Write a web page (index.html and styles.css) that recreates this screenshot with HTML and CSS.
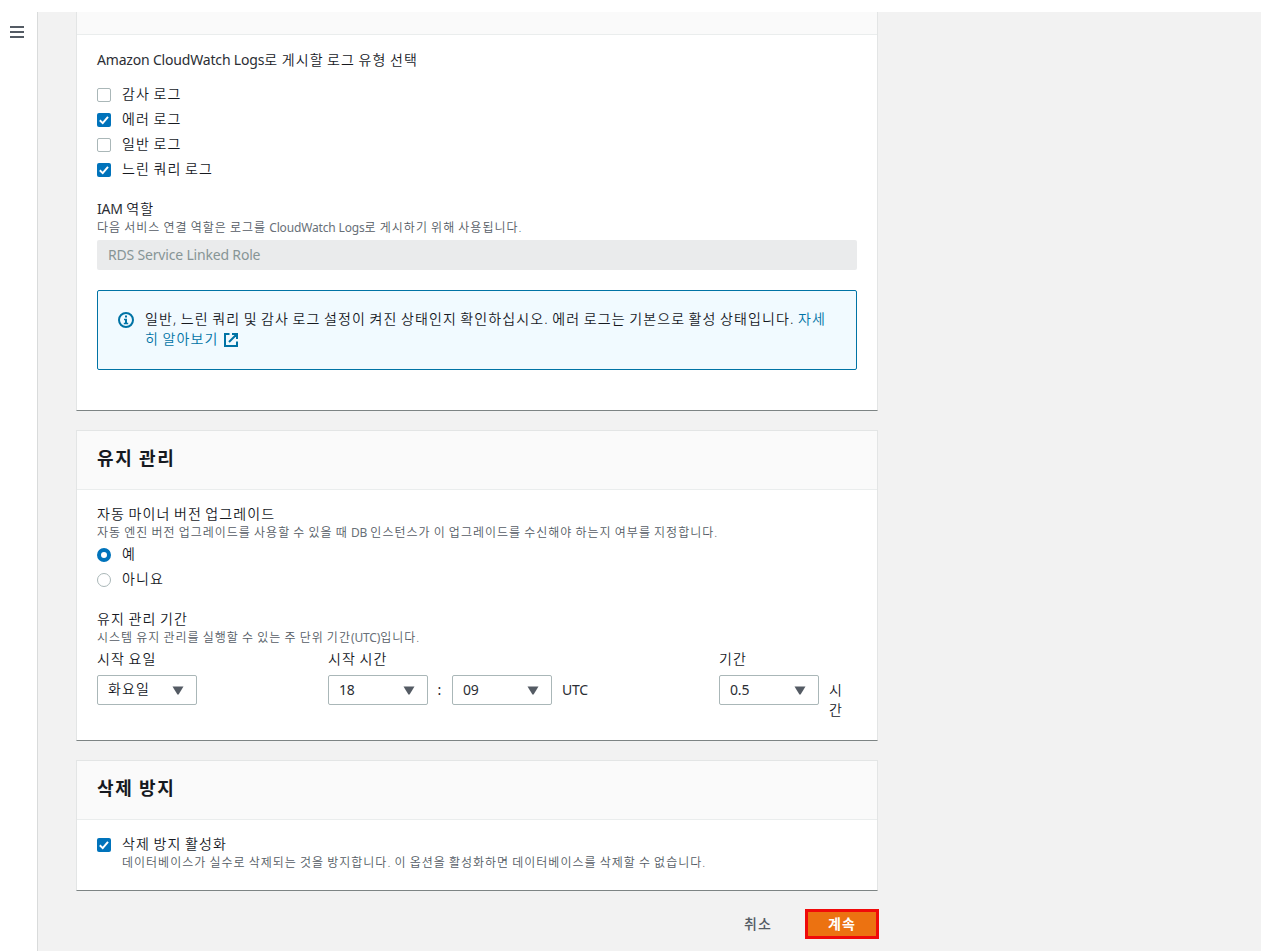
FILE: index.html
```html
<!DOCTYPE html>
<html lang="ko">
<head>
<meta charset="utf-8">
<title>DB 인스턴스 수정</title>
<link rel="stylesheet" href="styles.css">
</head>
<body>
<div class="app">
  <nav class="rail">
    <svg class="menu" width="14" height="12" viewBox="0 0 14 12"><path d="M0 1h14M0 6h14M0 11h14" stroke="#545b64" stroke-width="2"/></svg>
  </nav>
  <main class="main">
    <section class="card card-logs">
      <header class="card-head head-cut"></header>
      <div class="card-body body-logs">
        <p class="label label-first"><span class="en">Amazon CloudWatch Logs</span>로 게시할 로그 유형 선택</p>
        <div class="options options-logs">
          <label class="option"><span class="box"></span>감사 로그</label>
          <label class="option"><span class="box on"><svg width="14" height="14" viewBox="0 0 14 14"><path d="M2.8 7.3l2.9 2.8 5.3-6.3"/></svg></span>에러 로그</label>
          <label class="option"><span class="box"></span>일반 로그</label>
          <label class="option"><span class="box on"><svg width="14" height="14" viewBox="0 0 14 14"><path d="M2.8 7.3l2.9 2.8 5.3-6.3"/></svg></span>느린 쿼리 로그</label>
        </div>
        <p class="label"><span class="en">IAM </span>역할</p>
        <p class="hint">다음 서비스 연결 역할은 로그를 <span class="en">CloudWatch Logs</span>로 게시하기 위해 사용됩니다.</p>
        <div class="input-off"><span class="en">RDS Service Linked Role</span></div>
        <div class="alert">
          <svg class="info" width="16" height="16" viewBox="0 0 16 16"><circle cx="8" cy="8" r="7" fill="none" stroke="#0073a5" stroke-width="2"/><path d="M7 3.6h2v1.9H7zM6 6.7h3v4h1.2v1.5H5.8v-1.5H7V8.2H6z" fill="#0073a5"/></svg>
          <p class="alert-text">일반, 느린 쿼리 및 감사 로그 설정이 켜진 상태인지 확인하십시오. 에러 로그는 기본으로 활성 상태입니다. <a class="link">자세<br>히 알아보기<svg class="ext" width="14" height="14" viewBox="0 0 14 14"><path d="M5.5 1H1v12h12V8.5M8 1h5v5M13 1L5 9" fill="none" stroke="#0073a5" stroke-width="2"/></svg></a></p>
        </div>
      </div>
    </section>

    <section class="card">
      <header class="card-head"><h2 class="title">유지 관리</h2></header>
      <div class="card-body body-maint">
        <p class="label">자동 마이너 버전 업그레이드</p>
        <p class="hint">자동 엔진 버전 업그레이드를 사용할 수 있을 때 <span class="en">DB</span> 인스턴스가 이 업그레이드를 수신해야 하는지 여부를 지정합니다.</p>
        <div class="options options-radio">
          <label class="option"><span class="radio picked"></span>예</label>
          <label class="option"><span class="radio"></span>아니요</label>
        </div>
        <p class="label">유지 관리 기간</p>
        <p class="hint">시스템 유지 관리를 실행할 수 있는 주 단위 기간<span class="en">(UTC)</span>입니다.</p>
        <div class="window">
          <div class="field">
            <span class="label">시작 요일</span>
            <div class="row"><div class="select"><span class="value-ko">화요일</span><svg width="12" height="9" viewBox="0 0 12 9"><path d="M.5 .5h11L6.6 8.5H5.4z"/></svg></div></div>
          </div>
          <div class="field">
            <span class="label">시작 시간</span>
            <div class="row">
              <div class="select"><span class="en">18</span><svg width="12" height="9" viewBox="0 0 12 9"><path d="M.5 .5h11L6.6 8.5H5.4z"/></svg></div>
              <span class="colon">:</span>
              <div class="select"><span class="en">09</span><svg width="12" height="9" viewBox="0 0 12 9"><path d="M.5 .5h11L6.6 8.5H5.4z"/></svg></div>
              <span class="unit en">UTC</span>
            </div>
          </div>
          <div class="field">
            <span class="label">기간</span>
            <div class="row">
              <div class="select"><span class="en">0.5</span><svg width="12" height="9" viewBox="0 0 12 9"><path d="M.5 .5h11L6.6 8.5H5.4z"/></svg></div>
              <span class="unit unit-narrow">시간</span>
            </div>
          </div>
        </div>
      </div>
    </section>

    <section class="card">
      <header class="card-head"><h2 class="title">삭제 방지</h2></header>
      <div class="card-body body-delete">
        <label class="option"><span class="box on"><svg width="14" height="14" viewBox="0 0 14 14"><path d="M2.8 7.3l2.9 2.8 5.3-6.3"/></svg></span>삭제 방지 활성화</label>
        <p class="hint hint-indent">데이터베이스가 실수로 삭제되는 것을 방지합니다. 이 옵션을 활성화하면 데이터베이스를 삭제할 수 없습니다.</p>
      </div>
    </section>

    <div class="actions">
      <button class="btn btn-text">취소</button>
      <button class="btn btn-primary">계속</button>
    </div>
  </main>
</div>
</body>
</html>
```
FILE: styles.css
```css
* { box-sizing: border-box; }

body {
  margin: 0;
  background: #fff;
  color: #16191f;
  font: 350 14px/20px "Noto Sans", "Noto Sans CJK KR", sans-serif;
  letter-spacing: .079em;
  word-spacing: -.09em;
  overflow: hidden;
}

p, h2 { margin: 0; }

.en {
  font-weight: 400;
  letter-spacing: -.013em;
  word-spacing: 0;
  color: #2b2e34;
}

.app {
  display: flex;
  height: 951px;
  padding-top: 12px;
}

.rail {
  flex: none;
  width: 38px;
  border-right: 1px solid #d9dbdb;
  padding: 14px 0 0 10px;
}

.menu { display: block; }

.main {
  flex: 1;
  background: #f2f2f2;
  padding-left: 38px;
}

.card {
  width: 802px;
  margin-bottom: 19px;
  background: #fff;
  border: 1px solid #e3e5e5;
  border-bottom: 1px solid #7d8484;
}

.card-logs { border-top: 0; }

.card-head {
  height: 59px;
  padding: 16px 20px;
  background: #fafafa;
  border-bottom: 1px solid #eaeded;
}

.head-cut { height: 23px; padding: 0; }

.title {
  font-size: 18px;
  line-height: 22px;
  font-weight: 700;
  letter-spacing: .1em;
}

.card-body { padding: 0 20px; }
.body-logs { height: 375px; padding-top: 15px; }
.body-maint { height: 250px; padding-top: 15px; }
.body-delete { height: 70px; padding-top: 15px; }

.label {
  display: block;
  padding-bottom: 2px;
  line-height: 18px;
  white-space: nowrap;
}

.label-first { padding: 0; line-height: 20px; }

.hint {
  font-size: 12px;
  line-height: 16px;
  letter-spacing: .083em;
  word-spacing: -.08em;
  color: #545b64;
  white-space: nowrap;
}

.hint .en { color: #687078; }

.hint-indent { padding-left: 25px; }

.options { display: flex; flex-direction: column; gap: 5px; }
.options-logs { margin: 15px 0 20px; }
.options-radio { margin: 4px 0 20px; }

.option {
  display: flex;
  gap: 11px;
  height: 20px;
  line-height: 18px;
}

.box, .radio {
  flex: none;
  width: 14px;
  height: 14px;
  margin-top: 3px;
  border: 1px solid #aab7b8;
  border-radius: 2px;
  background: #fff;
}

.box.on { border: 0; background: #0073bb; }
.box svg { display: block; fill: none; stroke: #fff; stroke-width: 2; }

.radio { border-radius: 50%; }
.radio.picked { border: 4px solid #0073bb; }

.input-off {
  height: 30px;
  margin-top: 4px;
  padding: 5px 11px;
  border-radius: 2px;
  background: #eaebec;
}

.input-off .en { color: #879596; }

.alert {
  display: flex;
  gap: 11px;
  height: 80px;
  margin-top: 20px;
  padding: 18px 20px;
  border: 1px solid #0073a5;
  border-radius: 2px;
  background: #f1faff;
}

.info { flex: none; margin-top: 3px; }
.alert-text { white-space: nowrap; }
.link { color: #0073a5; }
.ext { margin-left: 6px; vertical-align: -3px; }

.window {
  display: grid;
  grid-template-columns: 231px 391px 1fr;
  margin-top: 4px;
}

.row { display: flex; margin-top: 5px; }

.select {
  display: flex;
  align-items: center;
  justify-content: space-between;
  width: 100px;
  height: 30px;
  padding: 0 12px 0 10px;
  border: 1px solid #aab7b8;
  border-radius: 2px;
}

.select svg { fill: #545b64; }
.value-ko { padding-bottom: 2px; }
.colon { width: 24px; line-height: 30px; text-align: center; font-weight: 400; }
.unit { margin-left: 10px; line-height: 30px; }
.unit-narrow { width: 16px; padding-top: 5px; line-height: 20px; }

.actions {
  display: flex;
  justify-content: flex-end;
  align-items: center;
  gap: 33px;
  width: 803px;
  margin-top: -1px;
}

.btn {
  height: 30px;
  padding: 0;
  border: 0;
  background: none;
  font: inherit;
  font-weight: 700;
  letter-spacing: inherit;
}

.btn-text { color: #545b64; font-weight: 500; }

.btn-primary {
  width: 74px;
  border: 3px solid #f00a0a;
  background: #ec7211;
  color: #fff;
}
```
